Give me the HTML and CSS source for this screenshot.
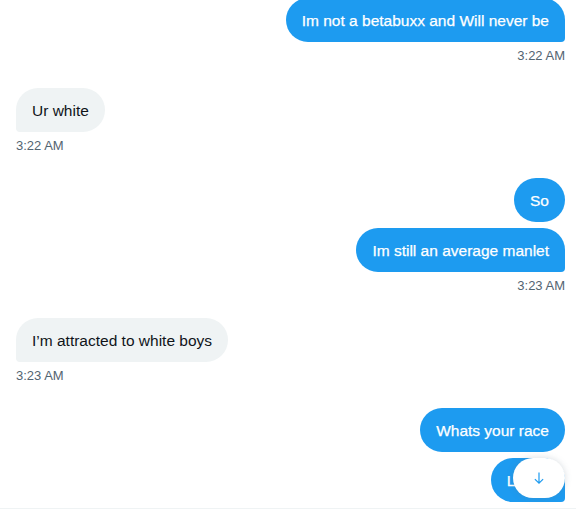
FILE: index.html
```html
<!DOCTYPE html>
<html lang="en">
  <head>
    <meta charset="UTF-8" />
    <meta name="viewport" content="width=device-width, initial-scale=1.0" />
    <title>Messages</title>
    <link rel="stylesheet" href="styles.css">
  </head>
  <body>
    <div class="chat">
      <div class="group sent">
        <div class="bubble last">Im not a betabuxx and Will never be</div>
        <div class="time">3:22 AM</div>
      </div>

      <div class="group received">
        <div class="bubble last">Ur white</div>
        <div class="time">3:22 AM</div>
      </div>

      <div class="group sent">
        <div class="bubble">So</div>
        <div class="bubble last">Im still an average manlet</div>
        <div class="time">3:23 AM</div>
      </div>

      <div class="group received">
        <div class="bubble last">I’m attracted to white boys</div>
        <div class="time">3:23 AM</div>
      </div>

      <div class="group sent">
        <div class="bubble">Whats your race</div>
        <div class="bubble last">Latina</div>
      </div>
    </div>

    <div class="composer"></div>

    <button class="scroll-down" aria-label="Scroll to bottom">
      <svg viewBox="0 0 24 24" width="18" height="18">
        <path d="M12 4.5v14.5M6.5 13.5l5.5 5.5 5.5-5.5" fill="none" stroke="#1d9bf0" stroke-width="1.6" />
      </svg>
    </button>
  </body>
</html>
```

FILE: styles.css
```css
* {
  box-sizing: border-box;
  margin: 0;
  padding: 0;
}

body {
  width: 576px;
  height: 510px;
  background: #fff;
  font-family: "Segoe UI", "Liberation Sans", Arial, sans-serif;
  color: #0f1419;
  display: flex;
  flex-direction: column;
  overflow: hidden;
}

.chat {
  flex: 1;
  overflow: hidden;
  padding: 0 11px 0 16px;
  margin-top: -2px;
  display: flex;
  flex-direction: column;
  gap: 24px;
}

.group {
  display: flex;
  flex-direction: column;
  gap: 6px;
}

.sent {
  align-items: flex-end;
}

.received {
  align-items: flex-start;
}

.bubble {
  padding: 13px 16px 11px;
  border-radius: 22px;
  font-size: 15.5px;
  line-height: 20px;
  white-space: nowrap;
}

.sent .bubble {
  background: #1d9bf0;
  color: #fff;
  -webkit-text-stroke: 0.25px #fff;
}

.sent .bubble.last {
  border-bottom-right-radius: 4px;
}

.received .bubble {
  background: #eff3f4;
  color: #0f1419;
}

.received .bubble.last {
  border-bottom-left-radius: 4px;
}

.time {
  font-size: 13px;
  line-height: 16px;
  color: #536471;
}

.composer {
  height: 2px;
  border-top: 1px solid #eff3f4;
}

.scroll-down {
  position: fixed;
  right: 11px;
  bottom: 12px;
  width: 52px;
  height: 40px;
  border: none;
  border-radius: 20px;
  background: #fff;
  box-shadow: 0 0 6px rgba(101, 119, 134, 0.25);
  display: flex;
  align-items: center;
  justify-content: center;
  cursor: pointer;
}
```
